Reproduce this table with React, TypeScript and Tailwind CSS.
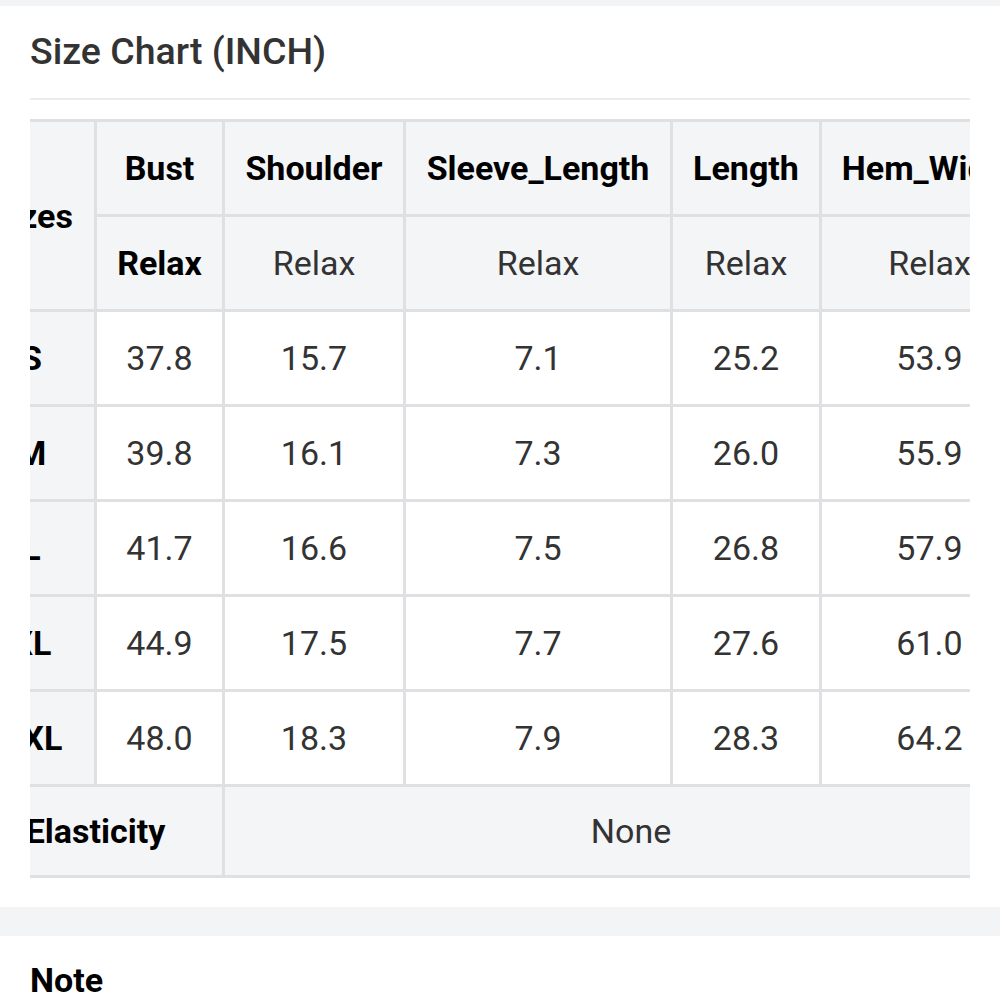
const columns = ['Bust', 'Shoulder', 'Sleeve_Length', 'Length', 'Hem_Width']

const rows: { size: string; values: string[] }[] = [
  { size: 'S', values: ['37.8', '15.7', '7.1', '25.2', '53.9'] },
  { size: 'M', values: ['39.8', '16.1', '7.3', '26.0', '55.9'] },
  { size: 'L', values: ['41.7', '16.6', '7.5', '26.8', '57.9'] },
  { size: 'XL', values: ['44.9', '17.5', '7.7', '27.6', '61.0'] },
  { size: 'XXL', values: ['48.0', '18.3', '7.9', '28.3', '64.2'] },
]

const base = 'border-[3px] border-[#dfe0e2] p-0 text-center align-middle'
const cell = `h-[95px] ${base}`
const lastCell = `h-[91px] ${base}`

export default function App() {
  return (
    <main className="min-h-screen bg-white font-['Roboto',sans-serif]">
      <div className="h-[6px] bg-[#f3f4f6]" />

      {/* Size chart card */}
      <section className="px-[30px] pb-[29px] pt-[24px]">
        <h2 className="text-[37.5px] font-medium leading-[42px] text-[#333]">
          Size Chart (INCH)
        </h2>
        <div className="mt-[26px] h-[2px] bg-[#ebebeb]" />

        <div className="mt-[19px] overflow-hidden">
          <table className="-ml-[64px] w-[1071px] max-w-none table-fixed border-collapse text-[34px] leading-none">
            <colgroup>
              <col className="w-[128px]" />
              <col className="w-[128px]" />
              <col className="w-[181px]" />
              <col className="w-[267px]" />
              <col className="w-[149px]" />
              <col className="w-[218px]" />
            </colgroup>
            <thead>
              <tr className="bg-[#f4f5f7]">
                <th rowSpan={2} className={`${cell} font-bold text-black`}>
                  Sizes
                </th>
                {columns.map((c) => (
                  <th key={c} className={`${cell} whitespace-nowrap font-bold text-black`}>
                    {c}
                  </th>
                ))}
              </tr>
              <tr className="bg-[#f4f5f7]">
                {columns.map((c, i) => (
                  <td
                    key={c}
                    className={`${cell} ${i === 0 ? 'font-bold text-black' : 'font-normal text-[#333]'}`}
                  >
                    Relax
                  </td>
                ))}
              </tr>
            </thead>
            <tbody>
              {rows.map((r) => (
                <tr key={r.size}>
                  <th className={`${cell} bg-[#f4f5f7] font-bold text-black`}>{r.size}</th>
                  {r.values.map((v, i) => (
                    <td key={i} className={`${cell} bg-white text-[#333]`}>
                      {v}
                    </td>
                  ))}
                </tr>
              ))}
              <tr className="bg-[#f4f5f7]">
                <th colSpan={2} className={`${lastCell} font-bold text-black`}>
                  Elasticity
                </th>
                <td colSpan={4} className={`${lastCell} text-[#333]`}>
                  None
                </td>
              </tr>
            </tbody>
          </table>
        </div>
      </section>

      <div className="h-[29px] bg-[#f3f4f6]" />

      {/* Note */}
      <section className="px-[30px] pt-[24px]">
        <h3 className="text-[34px] font-bold leading-[40px] text-black">Note</h3>
      </section>
    </main>
  )
}
